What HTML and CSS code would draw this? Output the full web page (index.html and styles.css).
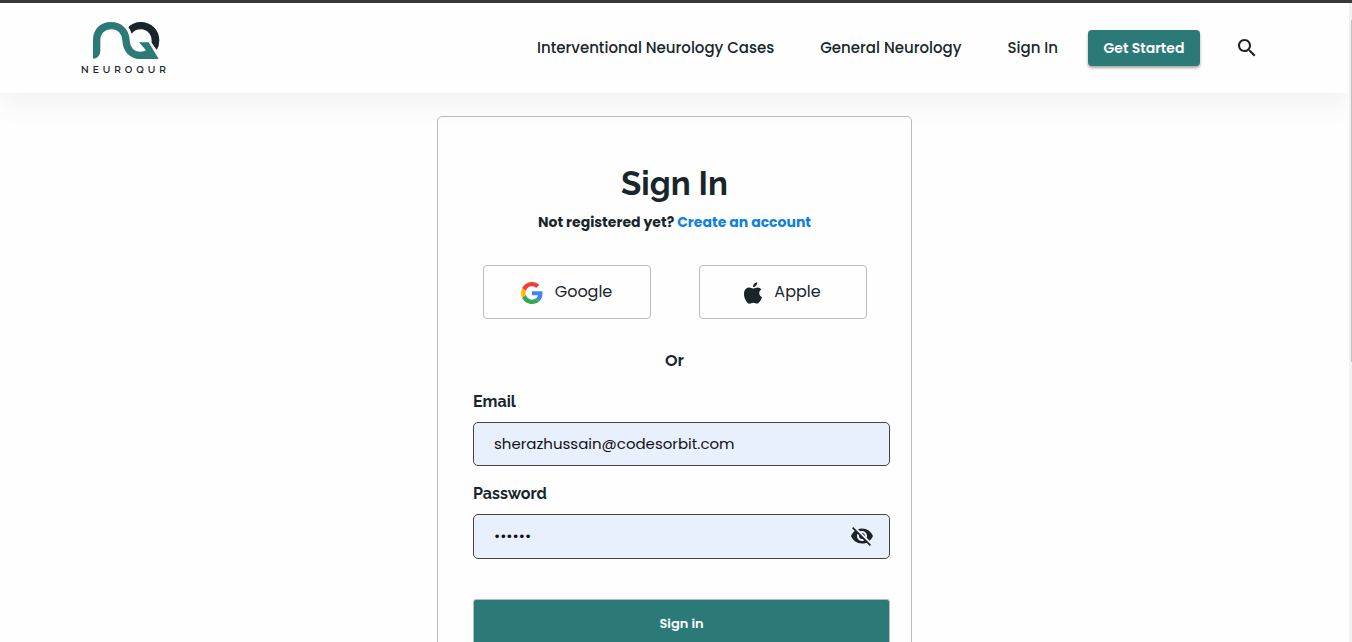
FILE: index.html
```html
<!DOCTYPE html>
<html lang="en">
<head>
<meta charset="utf-8">
<meta name="viewport" content="width=device-width, initial-scale=1">
<title>Sign In - Neuroqur</title>
<link rel="stylesheet" href="styles.css">
</head>
<body>
<div class="page">
  <header class="header">
    <a class="logo" href="#" aria-label="Neuroqur home">
      <svg class="logo-mark" viewBox="93 63 210 117" aria-hidden="true">
        <path fill="#2b7a77" d="M99 176V119C99 87 122 66 153 66C185 66 207 88 209 119C210 141 221 155 242 155Q251 155 258 151L237 127H266L296 177H268Q256 177 240 177C208 176 189 153 187 122C186 101 173 88 154 88C135 88 121 101 121 121V151C121 166 113 176 99 176Z"/>
        <path fill="#18262c" d="M205 82C214 72 227 66 242 66C274 66 298 90 298 121Q298 138 290 150L275 128C277 104 262 88 242 88Q225 88 215 101Q212 90 205 82Z"/>
      </svg>
      <span class="logo-name">NEUROQUR</span>
    </a>
    <nav class="nav">
      <a class="nav-link" href="#">Interventional Neurology Cases</a>
      <a class="nav-link" href="#">General Neurology</a>
      <a class="nav-link" href="#">Sign In</a>
    </nav>
    <button class="start" type="button">Get Started</button>
    <button class="search" type="button" aria-label="Search">
      <svg viewBox="0 0 24 24" width="24" height="24" aria-hidden="true"><path fill="#202124" d="M15.500 14h-.79l-.28-.27C15.410 12.590 16 11.110 16 9.500 16 5.910 13.090 3 9.500 3S3 5.910 3 9.500 5.910 16 9.500 16c1.610 0 3.090-.59 4.230-1.570l.27.28v.79l5 4.990L20.490 19l-4.990-5zm-6 0C7.010 14 5 11.990 5 9.500S7.010 5 9.500 5 14 7.010 14 9.500 11.990 14 9.500 14z"/></svg>
    </button>
  </header>
  <main class="main">
    <section class="card">
      <h1 class="title">Sign In</h1>
      <p class="register">Not registered yet? <a class="register-link" href="#">Create an account</a></p>
      <div class="social">
        <button class="social-button" type="button">
          <svg viewBox="0 0 48 48" width="22" height="22" aria-hidden="true">
            <path fill="#ea4335" d="M24 9.500c3.540 0 6.710 1.220 9.210 3.600l6.850-6.850C35.900 2.380 30.470 0 24 0 14.620 0 6.510 5.380 2.560 13.220l7.980 6.190C12.430 13.720 17.740 9.500 24 9.500z"/>
            <path fill="#4285f4" d="M46.980 24.550c0-1.570-.15-3.090-.38-4.550H24v9.020h12.940c-.58 2.960-2.260 5.480-4.780 7.180l7.730 6c4.510-4.180 7.090-10.360 7.090-17.650z"/>
            <path fill="#fbbc05" d="M10.530 28.590c-.48-1.450-.76-2.990-.76-4.590s.27-3.140.76-4.590l-7.980-6.190C.92 16.460 0 20.120 0 24c0 3.880.92 7.540 2.560 10.780l7.970-6.190z"/>
            <path fill="#34a853" d="M24 48c6.480 0 11.930-2.130 15.890-5.810l-7.730-6c-2.150 1.450-4.920 2.300-8.160 2.300-6.260 0-11.570-4.220-13.470-9.910l-7.980 6.190C6.510 42.620 14.620 48 24 48z"/>
          </svg>
          <span class="social-name">Google</span>
        </button>
        <button class="social-button" type="button">
          <svg viewBox="0 0 18 22" width="18" height="22" aria-hidden="true">
            <path fill="#18262c" d="M13.300 0.300C13.400 2.900 11.300 5.200 9 5.100C8.900 2.700 11 .5 13.300 .3ZM17.400 7.500C14.200 9.500 14.700 13.700 18 15C17.300 17.400 15.300 21.500 13.200 21.600C11.700 21.700 11.200 20.700 9.400 20.700C7.600 20.700 7 21.600 5.600 21.700C3 21.800 0 16.500 0 12C0 7.700 2.600 5.600 5 5.600C6.800 5.600 8 6.600 9.200 6.600C10.300 6.600 11.800 5.500 13.800 5.500C15 5.600 16.500 6.200 17.400 7.500Z"/>
          </svg>
          <span class="social-name">Apple</span>
        </button>
      </div>
      <p class="divider">Or</p>
      <form class="form">
        <div class="field">
          <label class="label" for="email">Email</label>
          <input class="input" id="email" type="email" value="sherazhussain@codesorbit.com">
        </div>
        <div class="field">
          <label class="label" for="password">Password</label>
          <div class="password-box">
            <input class="input input-password" id="password" type="password" value="secret">
            <button class="reveal" type="button" aria-label="Show password">
              <svg viewBox="0 0 24 24" width="24" height="24" aria-hidden="true"><path fill="#202124" d="M12 7c2.760 0 5 2.240 5 5 0 .65-.13 1.260-.36 1.830l2.920 2.920c1.510-1.260 2.700-2.890 3.430-4.750-1.730-4.390-6-7.500-11-7.500-1.400 0-2.740.25-3.980.7l2.160 2.160C10.740 7.130 11.350 7 12 7zM2 4.270l2.280 2.280.46.46C3.080 8.300 1.780 10.020 1 12c1.730 4.390 6 7.500 11 7.500 1.550 0 3.030-.3 4.380-.84l.42.42L19.730 22 21 20.730 3.270 3 2 4.270zM7.530 9.800l1.550 1.550c-.05.21-.08.43-.08.65 0 1.660 1.340 3 3 3 .22 0 .44-.03.65-.08l1.550 1.550c-.67.33-1.410.53-2.200.53-2.760 0-5-2.240-5-5 0-.79.2-1.530.53-2.200zm4.310-.78l3.150 3.150.02-.16c0-1.660-1.340-3-3-3l-.17.01z"/></svg>
            </button>
          </div>
        </div>
        <button class="submit" type="submit">Sign in</button>
      </form>
    </section>
  </main>
  <div class="scroll-track" aria-hidden="true"><div class="scroll-thumb"></div></div>
</div>
</body>
</html>
```
FILE: styles.css
```css
* {
  box-sizing: border-box;
}

body {
  margin: 0;
  background: #fefefe;
  color: #18262c;
  font-family: Poppins, Inter, sans-serif;
  font-size: 16px;
  line-height: 24px;
}

button,
input {
  font: inherit;
  color: inherit;
}

button {
  padding: 0;
  border: 0;
  background: none;
  cursor: pointer;
}

a {
  color: inherit;
  text-decoration: none;
}

svg {
  display: block;
}

.page {
  position: relative;
  height: 100vh;
  overflow: hidden;
  border-top: 3px solid #3a3839;
}

.header {
  display: flex;
  align-items: center;
  height: 90px;
  margin-right: 3px;
  padding: 0 90px 0 81px;
  background: #fefefe;
  box-shadow: 0 10px 30px rgba(0, 0, 0, 0.06);
}

.logo {
  display: flex;
  flex-direction: column;
  align-items: flex-start;
  gap: 4px;
}

.logo-mark {
  width: 70px;
  height: 39px;
  margin-left: 10px;
}

.logo-name {
  font-family: Raleway, Lato, sans-serif;
  font-size: 10px;
  font-weight: 600;
  line-height: 12px;
  letter-spacing: 4px;
}

.nav {
  display: flex;
  gap: 46px;
  margin-left: auto;
  font-size: 15px;
  font-weight: 500;
}

.start {
  width: 112px;
  height: 36px;
  margin: 0 35px 0 30px;
  border-radius: 4px;
  background: #2b7a77;
  box-shadow: 0 2px 3px rgba(0, 0, 0, 0.35);
  color: #fff;
  font-size: 14px;
  font-weight: 600;
}

.main {
  display: flex;
  justify-content: center;
  margin-right: 3px;
  padding-top: 23px;
}

.card {
  width: 475px;
  padding: 47px 21px 40px 35px;
  border: 1px solid #bbb;
  border-radius: 5px;
}

.title,
.register,
.social,
.divider {
  margin: 0 14px 0 0;
  text-align: center;
}

.title {
  font-family: Raleway, Inter, sans-serif;
  font-size: 33px;
  font-weight: 700;
  line-height: 40px;
}

.register {
  padding-top: 6px;
  font-size: 14px;
  font-weight: 700;
}

.register-link {
  color: #0d80e0;
}

.social {
  display: flex;
  justify-content: center;
  gap: 48px;
  padding-top: 31px;
}

.social-button {
  display: flex;
  align-items: center;
  justify-content: center;
  gap: 12px;
  width: 168px;
  height: 54px;
  padding-top: 2px;
  border: 1px solid #bbb;
  border-radius: 4px;
}

.social-name {
  padding-bottom: 2px;
}

.divider {
  padding-top: 30px;
  font-weight: 600;
}

.form {
  display: flex;
  flex-direction: column;
  gap: 16px;
  padding-top: 17px;
}

.field {
  display: flex;
  flex-direction: column;
  gap: 8px;
}

.label {
  font-family: Raleway, Inter, sans-serif;
  font-size: 16px;
  font-weight: 700;
}

.input {
  width: 100%;
  height: 44px;
  padding: 0 20px 2px;
  border: 1px solid #444;
  border-radius: 5px;
  background: #e8effd;
  color: #111;
  font-size: 15px;
}

.password-box {
  position: relative;
}

.input-password {
  display: block;
  height: 45px;
  padding-right: 56px;
}

.reveal {
  position: absolute;
  top: 10px;
  right: 16px;
}

.submit {
  height: 50px;
  margin-top: 24px;
  border: 1px solid #bbb;
  border-radius: 3px;
  background: #2b7a77;
  color: #fff;
  font-size: 13px;
  font-weight: 600;
}

.scroll-track {
  position: absolute;
  top: 0;
  right: 0;
  bottom: 0;
  width: 3px;
  padding: 17px 0 0 2px;
  background: #f1f1f1;
}

.scroll-thumb {
  height: 55%;
  background: #c1c1c1;
}
```
